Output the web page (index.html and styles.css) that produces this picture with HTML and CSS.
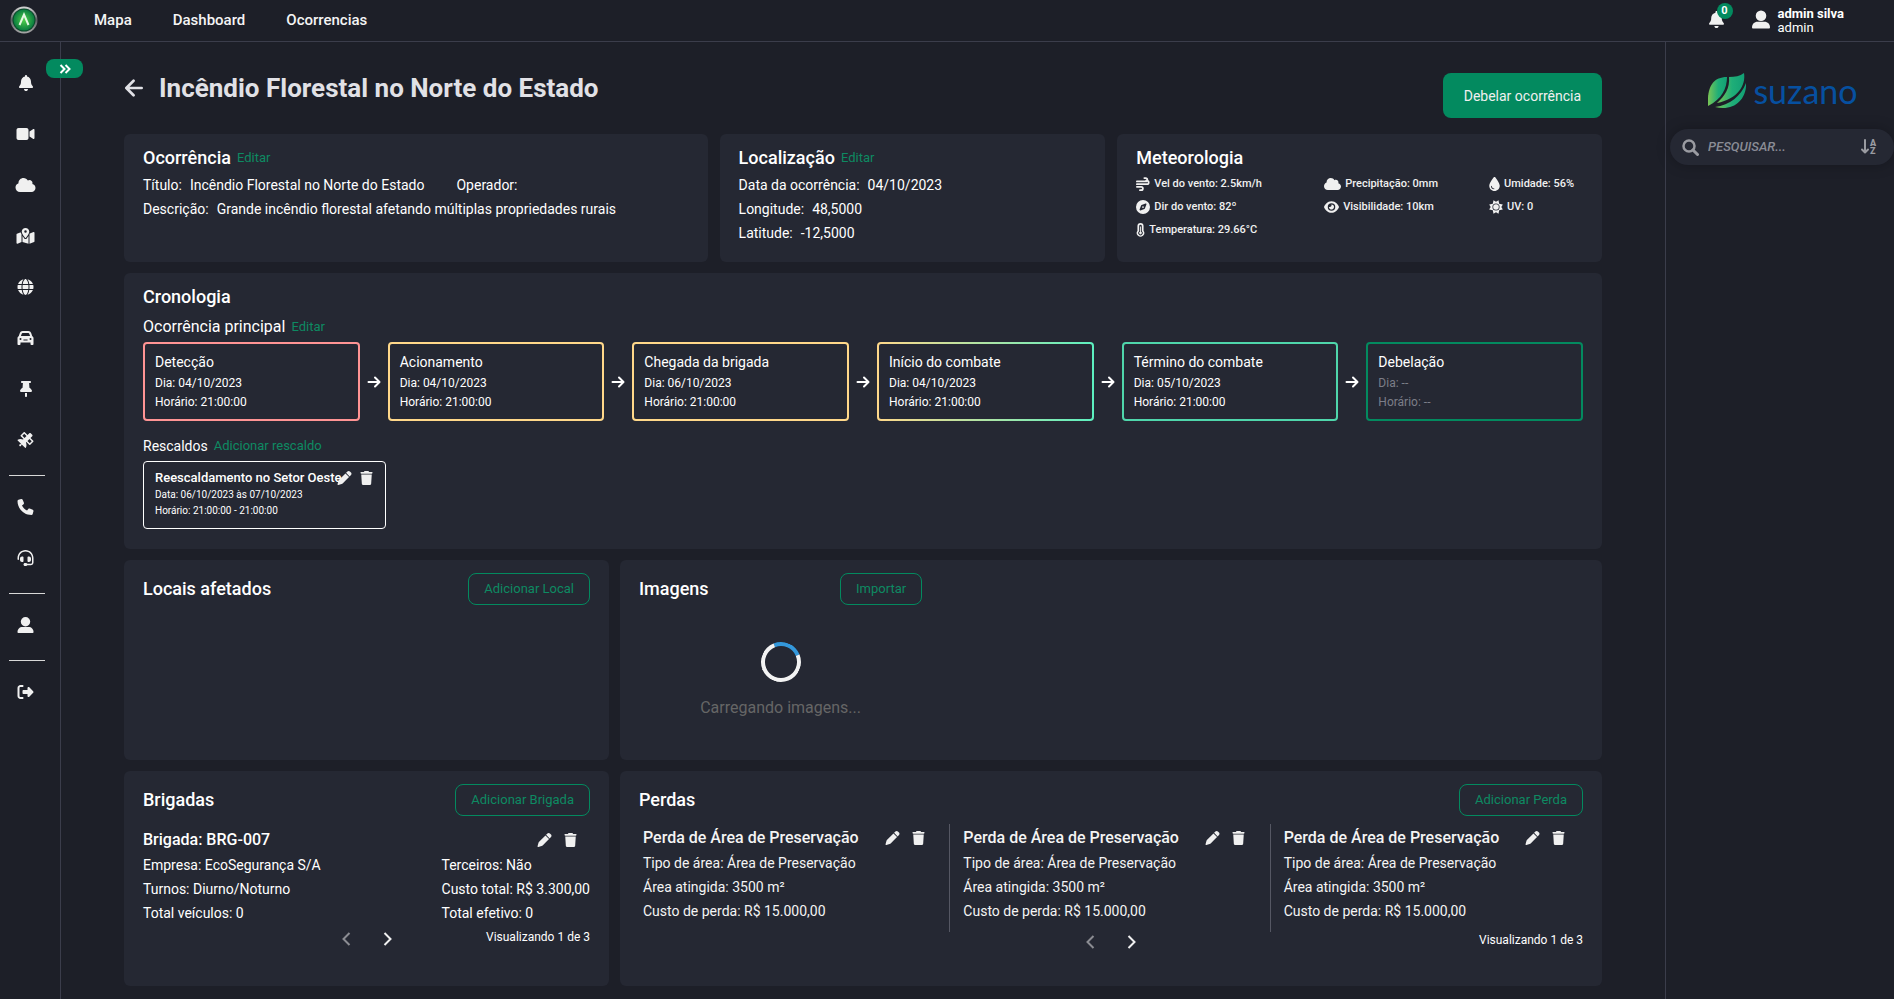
FILE: index.html
```
<!DOCTYPE html>
<html lang="pt-BR">
<head>
<meta charset="utf-8">
<title>Incêndio Florestal no Norte do Estado</title>
<link rel="stylesheet" href="styles.css">
</head>
<body>
<svg class="sprite" aria-hidden="true">
  <symbol id="i-bell" viewBox="0 0 448 512"><path d="M224 0c-17.700 0-32 14.300-32 32V51.200C119 66 64 130.600 64 208v18.800c0 47-17.300 92.400-48.500 127.600l-7.400 8.300c-8.400 9.400-10.400 22.900-5.300 34.400S19.400 416 32 416H416c12.600 0 24-7.400 29.200-18.900s3.100-25-5.300-34.400l-7.400-8.300C401.300 319.200 384 273.900 384 226.800V208c0-77.400-55-142-128-156.800V32c0-17.700-14.300-32-32-32zm45.300 493.300c12-12 18.700-28.300 18.700-45.300H224 160c0 17 6.700 33.300 18.700 45.300s28.300 18.700 45.300 18.700s33.300-6.700 45.300-18.700z"/></symbol>
  <symbol id="i-video" viewBox="0 0 576 512"><path d="M0 128C0 92.700 28.700 64 64 64H320c35.300 0 64 28.700 64 64V384c0 35.300-28.700 64-64 64H64c-35.300 0-64-28.700-64-64V128zM559.100 99.800c10.400 5.600 16.900 16.400 16.900 28.200V384c0 11.800-6.500 22.600-16.900 28.200s-23 5-32.900-1.600l-96-64L416 337.100V320 192 174.900l14.200-9.500 96-64c9.800-6.500 22.400-7.200 32.900-1.600z"/></symbol>
  <symbol id="i-cloud" viewBox="0 0 640 512"><path d="M0 336c0 79.500 64.500 144 144 144H512c70.700 0 128-57.300 128-128c0-61.900-44-113.600-102.400-125.400c4.100-10.700 6.400-22.400 6.400-34.600c0-53-43-96-96-96c-19.700 0-38.100 6-53.300 16.200C367 64.200 315.300 32 256 32C167.600 32 96 103.600 96 192c0 2.700 .1 5.400 .2 8.100C40.200 219.800 0 273.200 0 336z"/></symbol>
  <symbol id="i-map" viewBox="0 0 576 512"><path d="M408 120c0 54.600-73.100 151.900-105.200 192c-7.700 9.600-22 9.600-29.600 0C241.100 271.900 168 174.600 168 120C168 53.700 221.700 0 288 0s120 53.700 120 120zm8 80.400c3.500-6.900 6.700-13.800 9.600-20.600c.5-1.200 1-2.500 1.500-3.700l116-46.400C558.900 123.400 576 135 576 152V422.800c0 9.800-6 18.600-15.100 22.300L416 503V200.400zM137.600 138.300c2.400 14.100 7.200 28.300 12.800 41.500c2.900 6.800 6.100 13.700 9.600 20.600V451.800L32.900 502.700C17.100 509 0 497.400 0 480.400V209.600c0-9.800 6-18.600 15.100-22.300l122.600-49zM327.800 332c13.900-17.400 35.700-45.700 56.200-77V504.300L192 449.400V255c20.500 31.300 42.300 59.600 56.200 77c20.500 25.600 59.100 25.600 79.600 0zM288 152a40 40 0 1 0 0-80 40 40 0 1 0 0 80z"/></symbol>
  <symbol id="i-globe" viewBox="0 0 512 512"><path d="M352 256c0 22.200-1.200 43.600-3.300 64H163.300c-2.200-20.400-3.300-41.800-3.300-64s1.200-43.600 3.300-64H348.700c2.200 20.400 3.300 41.800 3.300 64zm28.800-64H503.900c5.300 20.500 8.100 41.900 8.100 64s-2.800 43.500-8.100 64H380.800c2.100-20.600 3.200-42 3.200-64s-1.100-43.400-3.200-64zm112.600-32H376.700c-10-63.900-29.800-117.400-55.300-151.600c78.300 20.700 142 77.500 171.900 151.600zm-149.100 0H167.700c6.100-36.400 15.500-68.600 27-94.700c10.500-23.600 22.200-40.700 33.500-51.500C239.400 3.200 248.700 0 256 0s16.600 3.200 27.800 13.800c11.300 10.800 23 27.900 33.500 51.500c11.600 26 20.900 58.200 27 94.700zm-209 0H18.600C48.600 85.900 112.200 29.100 190.600 8.400C165.100 42.600 145.300 96.100 135.300 160zM8.100 192H131.200c-2.100 20.600-3.200 42-3.200 64s1.100 43.400 3.200 64H8.100C2.800 299.500 0 278.100 0 256s2.800-43.500 8.100-64zM194.700 446.600c-11.600-26-20.900-58.200-27-94.600H344.300c-6.100 36.400-15.500 68.600-27 94.600c-10.500 23.600-22.200 40.700-33.500 51.500C272.600 508.800 263.300 512 256 512s-16.600-3.200-27.800-13.800c-11.300-10.800-23-27.900-33.500-51.500zM135.300 352c10 63.900 29.800 117.400 55.300 151.600C112.200 482.900 48.600 426.100 18.600 352H135.300zm358.100 0c-30 74.100-93.600 130.900-171.900 151.600c25.500-34.200 45.200-87.700 55.300-151.600H493.400z"/></symbol>
  <symbol id="i-car" viewBox="0 0 512 512"><path fill-rule="evenodd" d="M135.200 117.400L109.100 192H402.900l-26.100-74.600C372.300 104.600 360.200 96 346.600 96H165.400c-13.600 0-25.700 8.600-30.200 21.400zM39.600 196.800L74.800 96.300C88.300 57.800 124.600 32 165.400 32H346.600c40.800 0 77.100 25.800 90.600 64.300l35.200 100.500c23.200 9.600 39.600 32.500 39.600 59.200V448c0 17.700-14.300 32-32 32H448c-17.700 0-32-14.300-32-32V400H96v48c0 17.700-14.300 32-32 32H32c-17.700 0-32-14.300-32-32V256c0-26.700 16.400-49.600 39.600-59.200zM128 288a32 32 0 1 0-64 0 32 32 0 1 0 64 0zm320 0a32 32 0 1 0-64 0 32 32 0 1 0 64 0zM190 300h132v34H190z"/></symbol>
  <symbol id="i-pin" viewBox="0 0 384 512"><path d="M32 32C32 14.300 46.300 0 64 0H320c17.700 0 32 14.300 32 32s-14.300 32-32 32H290.500l11.400 148.200c36.700 19.900 65.700 53.200 79.500 94.700l1 3c3.300 9.800 1.600 20.500-4.400 28.800s-15.700 13.300-26 13.300H32c-10.300 0-19.900-4.900-26-13.300s-7.700-19.100-4.400-28.800l1-3c13.800-41.500 42.800-74.800 79.500-94.700L93.500 64H64C46.300 64 32 49.700 32 32zM160 384h64v96c0 17.700-14.300 32-32 32s-32-14.300-32-32V384z"/></symbol>
  <symbol id="i-satellite" viewBox="0 0 512 512"><path fill-rule="evenodd" d="M233 7c-9.400-9.400-24.600-9.400-33.900 0l-96 96c-9.400 9.400-9.400 24.600 0 33.900l89.400 89.400-15.500 15.500C152.300 230.400 124.900 224 96 224c-31.700 0-61.500 7.700-87.800 21.200c-9 4.700-10.300 16.700-3.100 23.800L112.700 376.700 96.300 393.100c-2.600-.7-5.400-1.100-8.300-1.100c-17.700 0-32 14.300-32 32s14.300 32 32 32s32-14.300 32-32c0-2.900-.4-5.600-1.100-8.300l16.400-16.400L242.900 506.900c7.200 7.200 19.200 5.900 23.800-3.100C280.300 477.500 288 447.700 288 416c0-28.900-6.400-56.300-17.800-80.900l15.500-15.500L375 409c9.400 9.400 24.600 9.400 33.900 0l96-96c9.400-9.400 9.400-24.600 0-33.900l-89.400-89.400 55-55c12.500-12.500 12.500-32.800 0-45.300l-48-48c-12.500-12.500-32.800-12.500-45.300 0l-55 55L233 7zM392 358L320 286l62-62 72 72zM216 58l72 72-62 62-72-72z"/></symbol>
  <symbol id="i-phone" viewBox="0 0 512 512"><path d="M164.900 24.600c-7.700-18.600-28-28.500-47.400-23.200l-88 24C12.100 30.200 0 46 0 64C0 311.400 200.600 512 448 512c18 0 33.800-12.100 38.600-29.500l24-88c5.300-19.400-4.600-39.700-23.200-47.400l-96-40c-16.300-6.800-35.200-2.100-46.300 11.600L304.700 368C234.300 334.700 177.300 277.700 144 207.300L193.300 167c13.700-11.200 18.400-30 11.600-46.300l-40-96z"/></symbol>
  <symbol id="i-headset" viewBox="0 0 512 512"><path d="M256 48C141.100 48 48 141.100 48 256v40c0 13.300-10.700 24-24 24s-24-10.700-24-24V256C0 114.600 114.600 0 256 0S512 114.600 512 256V400.100c0 48.600-39.400 88-88.100 88L313.600 488c-8.300 14.300-23.800 24-41.600 24H240c-26.500 0-48-21.500-48-48s21.500-48 48-48h32c17.800 0 33.300 9.700 41.600 24l110.400 .1c22.100 0 40-17.900 40-40V256c0-114.900-93.100-208-208-208zM144 208h16c17.700 0 32 14.300 32 32V352c0 17.700-14.300 32-32 32H144c-35.300 0-64-28.700-64-64V272c0-35.300 28.700-64 64-64zm224 0c35.300 0 64 28.700 64 64v48c0 35.300-28.700 64-64 64H352c-17.700 0-32-14.300-32-32V240c0-17.700 14.300-32 32-32h16z"/></symbol>
  <symbol id="i-user" viewBox="0 0 16 16"><circle cx="8" cy="4.700" r="4.700"/><path d="M0 15.200C0 12 2 10 5 10h6c3 0 5 2 5 5.200 0 .5-.3.800-.8.800H.8c-.5 0-.8-.3-.8-.8z"/></symbol>
  <symbol id="i-logout" viewBox="0 0 512 512"><path d="M377.900 105.900L500.700 228.700c7.200 7.200 11.300 17.100 11.300 27.300s-4.100 20.100-11.300 27.300L377.900 406.100c-6.400 6.400-15 9.900-24 9.900c-18.700 0-33.900-15.200-33.900-33.900l0-62.100-128 0c-17.700 0-32-14.300-32-32l0-64c0-17.700 14.300-32 32-32l128 0 0-62.100c0-18.700 15.200-33.900 33.900-33.900c9 0 17.600 3.600 24 9.900zM160 96L96 96c-17.700 0-32 14.300-32 32l0 256c0 17.700 14.300 32 32 32l64 0c17.700 0 32 14.300 32 32s-14.300 32-32 32l-64 0c-53 0-96-43-96-96L0 128C0 75 43 32 96 32l64 0c17.700 0 32 14.300 32 32s-14.300 32-32 32z"/></symbol>
  <symbol id="i-pen" viewBox="0 0 512 512"><path d="M362.700 19.300L314.300 67.700 444.300 197.700l48.400-48.400c25-25 25-65.500 0-90.500L453.300 19.300c-25-25-65.500-25-90.500 0zm-71 71L58.600 323.500c-10.400 10.400-18 23.300-22.200 37.400L1 481.200C-1.500 489.700 .8 498.800 7 505s15.300 8.500 23.700 6.100l120.300-35.400c14.100-4.200 27-11.800 37.400-22.200L421.700 220.300 291.700 90.300z"/></symbol>
  <symbol id="i-trash" viewBox="0 0 448 512"><path d="M135.200 17.700L128 32H32C14.300 32 0 46.300 0 64S14.300 96 32 96H416c17.700 0 32-14.300 32-32s-14.300-32-32-32H320l-7.200-14.300C307.400 6.800 296.300 0 284.200 0H163.800c-12.100 0-23.200 6.800-28.600 17.700zM416 128H32L53.200 467c1.600 25.300 22.600 45 47.900 45H346.900c25.300 0 46.300-19.700 47.900-45L416 128z"/></symbol>
  <symbol id="i-drop" viewBox="0 0 384 512"><path d="M192 512C86 512 0 426 0 320C0 228.800 130.200 57.700 166.600 11.700C172.600 4.200 181.500 0 191.100 0h1.800c9.600 0 18.500 4.200 24.500 11.700C253.800 57.700 384 228.800 384 320c0 106-86 192-192 192zM96 336c0-8.800-7.200-16-16-16s-16 7.200-16 16c0 61.900 50.100 112 112 112c8.800 0 16-7.200 16-16s-7.200-16-16-16c-44.200 0-80-35.800-80-80z"/></symbol>
  <symbol id="i-compass" viewBox="0 0 512 512"><path fill-rule="evenodd" d="M256 512A256 256 0 1 0 256 0a256 256 0 1 0 0 512zm50.700-186.900L162.400 380.600c-19.400 7.500-38.500-11.600-31-31l55.500-144.300c3.300-8.500 9.900-15.100 18.400-18.400l144.300-55.500c19.400-7.500 38.500 11.600 31 31L325.100 306.700c-3.200 8.500-9.900 15.100-18.400 18.400zM288 256a32 32 0 1 0 -64 0 32 32 0 1 0 64 0z"/></symbol>
  <symbol id="i-wind" viewBox="0 0 16 16"><path fill="none" stroke="currentColor" stroke-width="2" stroke-linecap="round" d="M9.500 1.200H11a1.900 1.900 0 0 1 0 3.900H1M11.500 4.200h1a2 2 0 0 1 0 4H1M1 11.200h5a1.900 1.900 0 0 1 0 3.800H4.500"/></symbol>
  <symbol id="i-eye" viewBox="0 0 576 512"><path fill-rule="evenodd" d="M288 32c-80.800 0-145.500 36.800-192.600 80.600C48.600 156 17.300 208 2.500 243.700c-3.300 7.900-3.300 16.700 0 24.600C17.300 304 48.600 356 95.400 399.400C142.500 443.200 207.200 480 288 480s145.500-36.800 192.600-80.600c46.800-43.500 78.100-95.400 93-131.100c3.300-7.900 3.300-16.700 0-24.600c-14.900-35.700-46.200-87.700-93-131.100C433.500 68.800 368.800 32 288 32zM144 256a144 144 0 1 1 288 0 144 144 0 1 1-288 0zm144-64c0 35.300-28.700 64-64 64c-7.100 0-13.900-1.200-20.300-3.300c-5.500-1.800-11.900 1.600-11.700 7.400c.3 6.900 1.300 13.800 3.200 20.700c13.700 51.200 66.400 81.600 117.600 67.900s81.600-66.400 67.900-117.600c-11.100-41.500-47.800-69.400-88.600-71.100c-5.800-.2-9.200 6.100-7.400 11.700c2.100 6.400 3.300 13.200 3.300 20.300z"/></symbol>
  <symbol id="i-sun" viewBox="0 0 16 16"><path fill-rule="evenodd" d="M8 1.900 10.900.2l.7 4.200 4.200.7L14.100 8l1.700 2.900-4.200.7-.7 4.200L8 14.100l-2.900 1.700-.7-4.200-4.200-.7L1.900 8 .2 5.100l4.200-.7.700-4.200zM8 3.900a4.100 4.100 0 1 0 0 8.200 4.100 4.100 0 0 0 0-8.200z"/><circle cx="8" cy="8" r="3.200"/></symbol>
  <symbol id="i-temp" viewBox="0 0 10 16"><path fill-rule="evenodd" d="M5 0a3.500 3.500 0 0 1 3.500 3.500v5.300a4.300 4.300 0 1 1-7 0V3.500A3.500 3.500 0 0 1 5 0zM3.500 3.500v6a2.500 2.500 0 1 0 3 0v-6a1.500 1.500 0 0 0-3 0z"/><path d="M4.500 4h1v5.900a1.500 1.500 0 1 1-1 0z"/></symbol>
  <symbol id="i-right" viewBox="0 0 14 14"><path fill="none" stroke="currentColor" stroke-width="2" stroke-linecap="round" stroke-linejoin="round" d="M1.500 7H12M8 2.500 12.500 7 8 11.500"/></symbol>
  <symbol id="i-left" viewBox="0 0 20 20"><path fill="none" stroke="currentColor" stroke-width="3" stroke-linecap="round" stroke-linejoin="round" d="M18.500 10H2M9.500 2 1.500 10l8 8"/></symbol>
  <symbol id="i-prev" viewBox="0 0 10 14"><path fill="none" stroke="currentColor" stroke-width="2" d="M8.500 1 2.500 7l6 6"/></symbol>
  <symbol id="i-next" viewBox="0 0 10 14"><path fill="none" stroke="currentColor" stroke-width="2" d="M1.500 1l6 6-6 6"/></symbol>
</svg>

<header class="topbar">
  <a class="brand" href="#" aria-label="Início">
    <svg width="28" height="28" viewBox="0 0 28 28">
      <defs>
        <linearGradient id="rim" x1="0" y1="0" x2="0" y2="1"><stop offset="0" stop-color="#d8d8d8"/><stop offset=".5" stop-color="#5c5f62"/><stop offset="1" stop-color="#a9a9a9"/></linearGradient>
        <radialGradient id="core"><stop offset="0" stop-color="#4fd04a"/><stop offset="1" stop-color="#0a7d3f"/></radialGradient>
      </defs>
      <circle cx="14" cy="14" r="13.500" fill="url(#rim)"/><circle cx="14" cy="14" r="11.500" fill="#0b4a2b"/><circle cx="14" cy="14" r="10.500" fill="url(#core)"/>
      <path d="M9.500 19 14 8.500l4.500 10.500" fill="none" stroke="#e4f7e2" stroke-width="2"/>
    </svg>
  </a>
  <nav class="topnav"><a href="#">Mapa</a><a href="#">Dashboard</a><a href="#">Ocorrencias</a></nav>
  <div class="account">
    <button class="alerts" aria-label="Notificações"><svg width="17" height="17"><use href="#i-bell"/></svg><span class="badge">0</span></button>
    <svg class="avatar" width="18" height="19"><use href="#i-user"/></svg>
    <div class="who"><strong>admin silva</strong><span>admin</span></div>
  </div>
</header>

<div class="shell">
  <nav class="rail">
    <button class="expand" aria-label="Expandir menu"><svg width="12" height="10" viewBox="0 0 12 10"><path d="M1.500 1l4 4-4 4M6.500 1l4 4-4 4" fill="none" stroke="currentColor" stroke-width="2"/></svg></button>
    <a href="#" aria-label="Alertas"><svg width="16" height="16"><use href="#i-bell"/></svg></a>
    <a href="#" aria-label="Câmeras"><svg width="19" height="16"><use href="#i-video"/></svg></a>
    <a href="#" aria-label="Clima"><svg width="21" height="16"><use href="#i-cloud"/></svg></a>
    <a href="#" aria-label="Mapa"><svg width="19" height="16"><use href="#i-map"/></svg></a>
    <a href="#" aria-label="Global"><svg width="17" height="16"><use href="#i-globe"/></svg></a>
    <a href="#" aria-label="Veículos"><svg width="17" height="16"><use href="#i-car"/></svg></a>
    <a href="#" aria-label="Marcadores"><svg width="16" height="16"><use href="#i-pin"/></svg></a>
    <a href="#" aria-label="Satélite"><svg width="17" height="16"><use href="#i-satellite"/></svg></a>
    <hr>
    <a href="#" aria-label="Telefone"><svg width="17" height="16"><use href="#i-phone"/></svg></a>
    <a href="#" aria-label="Suporte"><svg width="17" height="16"><use href="#i-headset"/></svg></a>
    <hr>
    <a href="#" aria-label="Perfil"><svg width="17" height="16"><use href="#i-user"/></svg></a>
    <hr>
    <a href="#" aria-label="Sair"><svg width="17" height="16"><use href="#i-logout"/></svg></a>
  </nav>

  <main class="main">
    <div class="page-head">
      <h1><button class="back" aria-label="Voltar"><svg width="20" height="18"><use href="#i-left"/></svg></button>Incêndio Florestal no Norte do Estado</h1>
      <button class="primary">Debelar ocorrência</button>
    </div>

    <div class="row top-row">
      <section class="card">
        <div class="heading"><h2>Ocorrência</h2><a href="#">Editar</a></div>
        <div class="line"><span>Título:</span><span>Incêndio Florestal no Norte do Estado</span><span class="apart">Operador:</span></div>
        <div class="line"><span>Descrição:</span><span>Grande incêndio florestal afetando múltiplas propriedades rurais</span></div>
      </section>
      <section class="card">
        <div class="heading"><h2>Localização</h2><a href="#">Editar</a></div>
        <div class="line"><span>Data da ocorrência:</span><span>04/10/2023</span></div>
        <div class="line"><span>Longitude:</span><span>48,5000</span></div>
        <div class="line"><span>Latitude:</span><span>-12,5000</span></div>
      </section>
      <section class="card">
        <div class="heading"><h2>Meteorologia</h2></div>
        <div class="weather">
          <span><svg width="14" height="14"><use href="#i-wind"/></svg>Vel do vento: 2.5km/h</span>
          <span><svg width="17" height="14"><use href="#i-cloud"/></svg>Precipitação: 0mm</span>
          <span><svg width="11" height="14"><use href="#i-drop"/></svg>Umidade: 56%</span>
          <span><svg width="14" height="14"><use href="#i-compass"/></svg>Dir do vento: 82º</span>
          <span><svg width="15" height="14"><use href="#i-eye"/></svg>Visibilidade: 10km</span>
          <span><svg width="14" height="14"><use href="#i-sun"/></svg>UV: 0</span>
          <span><svg width="9" height="14"><use href="#i-temp"/></svg>Temperatura: 29.66°C</span>
        </div>
      </section>
    </div>

    <section class="card chrono">
      <h2>Cronologia</h2>
      <div class="sub"><h3>Ocorrência principal</h3><a href="#">Editar</a></div>
      <div class="steps">
        <div class="step red"><h4>Detecção</h4><p>Dia: 04/10/2023</p><p>Horário: 21:00:00</p></div>
        <svg width="14" height="14"><use href="#i-right"/></svg>
        <div class="step yellow"><h4>Acionamento</h4><p>Dia: 04/10/2023</p><p>Horário: 21:00:00</p></div>
        <svg width="14" height="14"><use href="#i-right"/></svg>
        <div class="step yellow"><h4>Chegada da brigada</h4><p>Dia: 06/10/2023</p><p>Horário: 21:00:00</p></div>
        <svg width="14" height="14"><use href="#i-right"/></svg>
        <div class="step blend"><h4>Início do combate</h4><p>Dia: 04/10/2023</p><p>Horário: 21:00:00</p></div>
        <svg width="14" height="14"><use href="#i-right"/></svg>
        <div class="step mint"><h4>Término do combate</h4><p>Dia: 05/10/2023</p><p>Horário: 21:00:00</p></div>
        <svg width="14" height="14"><use href="#i-right"/></svg>
        <div class="step green pending"><h4>Debelação</h4><p>Dia: --</p><p>Horário: --</p></div>
      </div>
      <div class="sub second"><h4>Rescaldos</h4><a href="#">Adicionar rescaldo</a></div>
      <div class="rescaldo">
        <div class="rescaldo-head"><h5>Reescaldamento no Setor Oeste</h5>
          <button aria-label="Editar"><svg width="15" height="14"><use href="#i-pen"/></svg></button>
          <button aria-label="Excluir"><svg width="13" height="14"><use href="#i-trash"/></svg></button></div>
        <p>Data: 06/10/2023 às 07/10/2023</p>
        <p>Horário: 21:00:00 - 21:00:00</p>
      </div>
    </section>

    <div class="row split mid">
      <section class="card">
        <div class="bar"><h2>Locais afetados</h2><button class="outline">Adicionar Local</button></div>
      </section>
      <section class="card">
        <div class="gallery">
          <div class="bar"><h2>Imagens</h2><button class="outline">Importar</button></div>
          <div class="loading"><span class="spinner"></span><p>Carregando imagens...</p></div>
        </div>
      </section>
    </div>

    <div class="row split low">
      <section class="card">
        <div class="bar"><h2>Brigadas</h2><button class="outline">Adicionar Brigada</button></div>
        <div class="brigade-head"><h3>Brigada: BRG-007</h3>
          <div class="tools"><button aria-label="Editar"><svg width="15" height="14"><use href="#i-pen"/></svg></button><button aria-label="Excluir"><svg width="13" height="14"><use href="#i-trash"/></svg></button></div></div>
        <div class="brigade">
          <div><p>Empresa: EcoSegurança S/A</p><p>Turnos: Diurno/Noturno</p><p>Total veículos: 0</p></div>
          <div><p>Terceiros: Não</p><p>Custo total: R$ 3.300,00</p><p>Total efetivo: 0</p></div>
        </div>
        <div class="pager"><div class="arrows"><button disabled aria-label="Anterior"><svg width="10" height="14"><use href="#i-prev"/></svg></button><button aria-label="Próxima"><svg width="10" height="14"><use href="#i-next"/></svg></button></div><span>Visualizando 1 de 3</span></div>
      </section>
      <section class="card">
        <div class="bar"><h2>Perdas</h2><button class="outline">Adicionar Perda</button></div>
        <div class="losses">
          <article><div class="loss-head"><h3>Perda de Área de Preservação</h3><div class="tools"><button aria-label="Editar"><svg width="15" height="14"><use href="#i-pen"/></svg></button><button aria-label="Excluir"><svg width="13" height="14"><use href="#i-trash"/></svg></button></div></div>
            <p>Tipo de área: Área de Preservação</p><p>Área atingida: 3500 m²</p><p>Custo de perda: R$ 15.000,00</p></article>
          <article><div class="loss-head"><h3>Perda de Área de Preservação</h3><div class="tools"><button aria-label="Editar"><svg width="15" height="14"><use href="#i-pen"/></svg></button><button aria-label="Excluir"><svg width="13" height="14"><use href="#i-trash"/></svg></button></div></div>
            <p>Tipo de área: Área de Preservação</p><p>Área atingida: 3500 m²</p><p>Custo de perda: R$ 15.000,00</p></article>
          <article><div class="loss-head"><h3>Perda de Área de Preservação</h3><div class="tools"><button aria-label="Editar"><svg width="15" height="14"><use href="#i-pen"/></svg></button><button aria-label="Excluir"><svg width="13" height="14"><use href="#i-trash"/></svg></button></div></div>
            <p>Tipo de área: Área de Preservação</p><p>Área atingida: 3500 m²</p><p>Custo de perda: R$ 15.000,00</p></article>
        </div>
        <div class="pager raised"><div class="arrows"><button disabled aria-label="Anterior"><svg width="10" height="14"><use href="#i-prev"/></svg></button><button aria-label="Próxima"><svg width="10" height="14"><use href="#i-next"/></svg></button></div><span>Visualizando 1 de 3</span></div>
      </section>
    </div>
  </main>

  <aside class="side">
    <div class="company">
      <svg width="38" height="36" viewBox="0 0 38 36">
        <defs><linearGradient id="leaf" x1="0" y1="0" x2="1" y2="0"><stop offset="0" stop-color="#7cc655"/><stop offset=".55" stop-color="#1fae78"/><stop offset="1" stop-color="#12a075"/></linearGradient></defs>
        <path fill="url(#leaf)" d="M0 33C-1 17 3 4 19 4 19 15 14 26 0 33z"/>
        <path fill="url(#leaf)" d="M21 4c6 0 11-1 15-4 2 12-6 26-27 30C17 23 22 15 21 4z"/>
        <path fill="url(#leaf)" d="M7 34C22 32 33 23 38 10c1 15-11 29-31 24z"/>
      </svg>
      <span>suzano</span>
    </div>
    <div class="search">
      <svg width="17" height="17" viewBox="0 0 17 17"><circle cx="7" cy="7" r="5.500" fill="none" stroke="currentColor" stroke-width="2.500"/><path d="M11 11l4.500 4.500" stroke="currentColor" stroke-width="3" stroke-linecap="round"/></svg>
      <input type="text" placeholder="PESQUISAR..." aria-label="Pesquisar">
      <button aria-label="Ordenar"><svg class="sort" width="17" height="18" viewBox="0 0 17 18"><path d="M4 2v12M1 11.500l3 3 3-3" fill="none" stroke="currentColor" stroke-width="2" stroke-linecap="round" stroke-linejoin="round"/><text x="9" y="8" class="sort-letter">A</text><text x="9" y="16" class="sort-letter">Z</text></svg></button>
    </div>
  </aside>
</div>
</body>
</html>
```
FILE: styles.css
```
* { box-sizing: border-box; margin: 0; padding: 0; }

body {
  min-height: 100vh;
  display: flex;
  flex-direction: column;
  background: #1d1f28;
  color: #fff;
  font: 400 14px/24px Roboto, "Liberation Sans", sans-serif;
}

a { color: inherit; text-decoration: none; }
button { font: inherit; color: #f0f0f0; background: none; border: 0; cursor: pointer; }
svg { fill: currentColor; display: block; flex: none; }
h1, h2, h3, h4, h5 { font-weight: 500; }
.sprite { position: absolute; width: 0; height: 0; }

.topbar {
  height: 42px;
  flex: none;
  display: flex;
  align-items: center;
  padding: 0 50px 2px 10px;
  border-bottom: 1px solid #3b3d4b;
}
.topnav { display: flex; gap: 41px; margin-left: 56px; font-size: 15px; font-weight: 500; color: #f4f4f4; }
.account { display: flex; align-items: center; margin-left: auto; color: #f0f0f0; }
.alerts { position: relative; }
.badge {
  position: absolute;
  top: -8px;
  right: -8px;
  width: 16px;
  height: 16px;
  border-radius: 50%;
  background: #038a5f;
  color: #fff;
  font-size: 11px;
  font-weight: 700;
  line-height: 16px;
}
.avatar { margin: 0 8px 0 27px; }
.who { display: flex; flex-direction: column; padding-top: 2px; font-size: 13px; line-height: 14px; color: #fff; }
.who strong { font-weight: 700; }

.shell { flex: 1; display: flex; align-items: stretch; }

.rail {
  position: relative;
  width: 61px;
  flex: none;
  display: flex;
  flex-direction: column;
  align-items: center;
  padding: 15px 9px 0 0;
  border-right: 1px solid #3b3d4b;
  color: #f0f0f0;
}
.rail a { height: 51px; display: flex; align-items: center; }
.rail hr { width: 36px; height: 1px; border: 0; background: #d8d8d8; margin: 10px 0 5px 3px; }
.expand {
  position: absolute;
  top: 17px;
  left: 46px;
  width: 37px;
  height: 19px;
  border-radius: 8px;
  background: #038a5f;
  display: flex;
  align-items: center;
  justify-content: center;
  color: #fff;
}

.main { flex: 1; min-width: 0; padding: 31px 63px 13px; display: flex; flex-direction: column; gap: 11px; }

.page-head { display: flex; justify-content: space-between; margin-bottom: 5px; }
h1 { display: flex; align-items: center; gap: 15px; height: 30px; font-size: 26px; font-weight: 700; line-height: 30px; color: #e1e1e6; }
.back { color: #e1e1e6; }
.primary { height: 45px; padding: 0 21px; border-radius: 8px; background: #038a5f; }

.row { display: grid; gap: 11px; }
.top-row { grid-template-columns: 584fr 386fr 485fr; gap: 12px; }
.split { grid-template-columns: minmax(0, 485fr) minmax(0, 982fr); }
.card { background: #252833; border-radius: 6px; padding: 12px 19px; }
.top-row .card { min-height: 128px; }

h2 { font-size: 18px; line-height: 24px; }
.heading { display: flex; align-items: center; gap: 6px; margin-bottom: 3px; }
.heading a, .sub a { color: #0e8a62; font-size: 13px; }
.line { display: flex; gap: 8px; }
.line .apart { margin-left: 24px; }

.weather {
  display: grid;
  grid-template-columns: 188fr 165fr 94fr;
  margin-top: -1px;
  font-size: 11px;
  font-weight: 500;
  line-height: 23px;
  color: #f0f0f0;
}
.weather span { display: flex; align-items: center; gap: 4px; white-space: nowrap; }

.chrono { min-height: 276px; }
.sub { display: flex; align-items: center; gap: 6px; margin: 6px 0 3px; }
.sub h3 { font-size: 16px; font-weight: 400; }
.sub h4 { font-size: 14px; font-weight: 400; }
.sub.second { margin: 13px 0 3px; }
.steps { display: flex; align-items: center; gap: 7px; }
.step {
  flex: 1;
  height: 79px;
  padding: 8px 10px 0;
  border: 2px solid;
  border-radius: 4px;
}
.step h4 { font-size: 14px; font-weight: 400; line-height: 20px; margin-bottom: 2px; }
.step p { font-size: 12px; line-height: 19px; color: #fff; }
.red { border-color: #ff9494; }
.yellow { border-color: #ffd88a; }
.blend {
  border-color: transparent;
  background: linear-gradient(#252833, #252833) padding-box, linear-gradient(90deg, #ffd88a, #5cf0c0) border-box;
}
.mint { border-color: #4fd6ab; }
.green { border-color: #038a5f; }
.pending p { color: #7c7e88; }

.rescaldo { width: 243px; height: 68px; padding: 7px 12px 0 11px; border: 1px solid #fff; border-radius: 4px; }
.rescaldo-head { display: flex; align-items: center; height: 18px; }
.rescaldo h5 { flex: 1; min-width: 0; font-size: 13px; white-space: nowrap; }
.rescaldo-head button + button { margin-left: 8px; }
.rescaldo p { font-size: 10px; line-height: 16px; }

.bar { display: flex; align-items: center; justify-content: space-between; height: 32px; }
.mid .card { min-height: 200px; padding-top: 13px; }
.low .card { min-height: 215px; padding-top: 13px; }
.outline {
  height: 32px;
  padding: 0 15px;
  border: 1px solid #038a5f;
  border-radius: 8px;
  color: #0e8a62;
  font-size: 13px;
}

.gallery { width: 30%; }
.loading { display: flex; flex-direction: column; align-items: center; gap: 14px; margin-top: 37px; font-size: 16px; color: #666; }
.spinner {
  width: 40px;
  height: 40px;
  border: 4px solid #f3f3f3;
  border-top-color: #3498db;
  border-radius: 50%;
  transform: rotate(23deg);
}

.tools { display: flex; gap: 12px; }
.brigade-head { display: flex; align-items: center; justify-content: space-between; margin-top: 12px; padding-right: 13px; }
.brigade-head h3, .loss-head h3 { font-size: 16px; }
.brigade { display: flex; justify-content: space-between; margin-top: 1px; }
.pager { display: grid; grid-template-columns: 1fr auto 1fr; font-size: 12px; }
.pager.raised { margin-top: -4px; }
.arrows { grid-column: 2; display: flex; gap: 32px; padding-top: 4px; }
.arrows button:disabled { opacity: .5; }
.pager span { justify-self: end; }

.losses { display: grid; grid-template-columns: 310fr 320fr 313fr; margin-top: 8px; height: 108px; color: #f4f4f4; }
.losses article { padding: 2px 0 0 4px; }
.losses article + article { border-left: 1px solid #555763; padding-left: 13px; }
.loss-head { display: flex; align-items: center; gap: 26px; white-space: nowrap; margin-bottom: 1px; }

.side { width: 229px; flex: none; border-left: 1px solid #3b3d4b; }
.company { display: flex; align-items: center; justify-content: center; gap: 7px; margin: 31px 0 20px 6px; }
.company span { font: 400 34px/36px Lato, sans-serif; color: #0650a0; }
.search {
  display: flex;
  align-items: center;
  height: 36px;
  margin-left: 4px;
  padding: 0 16px 0 12px;
  border-radius: 18px;
  background: #252833;
  color: #9a9ba1;
  box-shadow: 0 0 14px rgba(0, 0, 0, .25);
}
.search input {
  flex: 1;
  min-width: 0;
  margin-left: 9px;
  border: 0;
  outline: 0;
  background: none;
  color: #fff;
  font: italic 500 13px/20px Roboto, sans-serif;
}
.search input::placeholder { color: #8a8c95; }
.search button { color: #9a9ba1; }
.sort { overflow: visible; }
.sort-letter { font: 900 9px/9px Roboto, sans-serif; }
```
